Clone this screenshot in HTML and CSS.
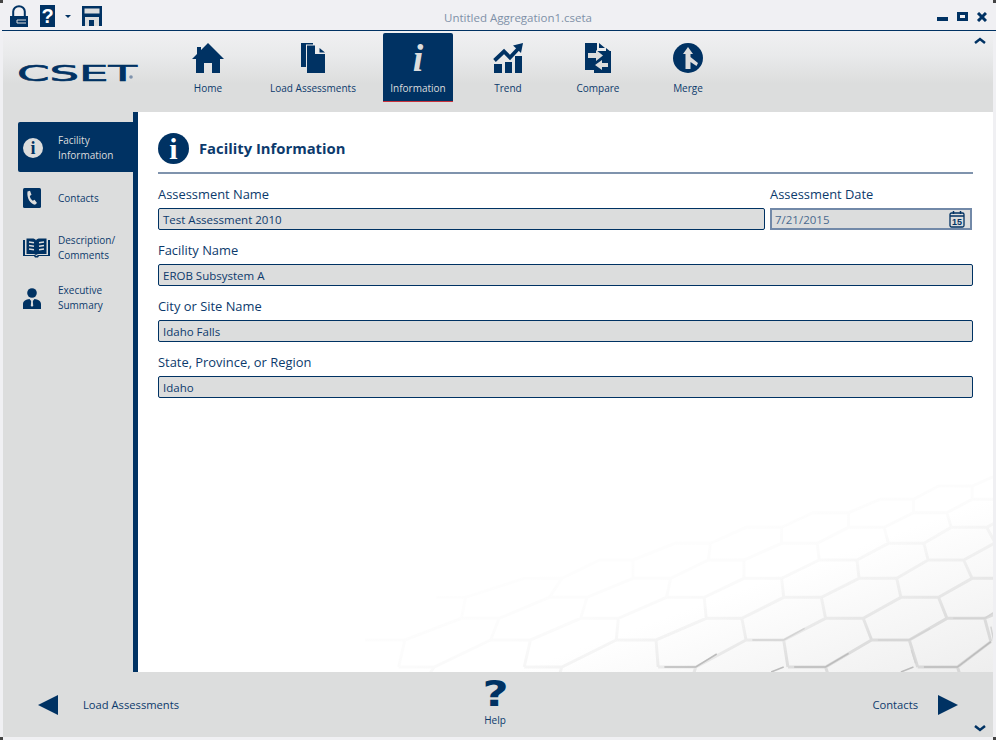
FILE: index.html
```html
<!DOCTYPE html>
<html lang="en">
<head>
    <meta charset="UTF-8">
    <meta name="viewport" content="width=device-width, initial-scale=1.0">
    <title>CSET</title>
    <link rel="stylesheet" href="styles.css">
</head>
<body>
    <span class="corner corner-tl"></span>
    <span class="corner corner-tr"></span>
    <span class="corner corner-bl"></span>
    <span class="corner corner-br"></span>

    <div class="titlebar">
        <div class="quick-tools">
            <svg class="tool-lock" width="18" height="22" viewBox="0 0 18 22"><path d="M3.200 12V6.500a5.800 5.300 0 0 1 11.600 0V12" fill="none" stroke="#003263" stroke-width="2"/><path d="M0 11h18v11H0z" fill="#003263"/><path d="M16 15H7v3h9" fill="none" stroke="#dcdddd"/></svg>
            <span class="tool-help">?</span>
            <span class="tool-caret"></span>
            <svg class="tool-save" width="20" height="20" viewBox="0 0 20 20"><path d="M0 0h20v20H0z" fill="#003263"/><path d="M2.500 2.500h15v5h-15zM3 11h14v9H3z" fill="#dcdddd"/><path d="M7 14h5v6H7z" fill="#003263"/></svg>
        </div>
        <div class="file-title">Untitled Aggregation1.cseta</div>
        <div class="window-buttons">
            <svg width="50" height="10" viewBox="0 0 50 10"><path d="M0 5h11v4H0z" fill="#003263"/><path fill-rule="evenodd" d="M20 0h11v9H20zM23 3v3h5V3z" fill="#003263"/><path d="M41 1l8 8M49 1l-8 8" stroke="#003263" stroke-width="3" fill="none"/></svg>
        </div>
    </div>

    <div class="app">
        <header class="ribbon">
            <div class="logo">
                <svg width="124" height="24" viewBox="0 0 124 24"><text x="-1" y="17" textLength="120" lengthAdjust="spacingAndGlyphs" class="logo-text">CSET</text><circle cx="113" cy="13" r="1.800" fill="#7f93ad"/></svg>
            </div>
            <nav class="ribbon-nav">
                <div class="nav-item">
                    <svg width="32" height="30" viewBox="0 0 32 30"><path d="M16 0L32 16h-4v14h-8V20h-8v10H4V16H0l5-5V4h4v3z" fill="#003263"/></svg>
                    <span>Home</span>
                </div>
                <div class="nav-item nav-wide">
                    <svg width="24" height="30" viewBox="0 0 24 30"><path d="M0 0h12v1.500H5V24H0z" fill="#003263"/><path d="M6 2.500h8V11h10v19H6z" fill="#003263"/><path d="M18.500 5L24 9.500h-5.500z" fill="#003263"/></svg>
                    <span>Load Assessments</span>
                </div>
                <div class="nav-item active">
                    <span class="info-glyph">i</span>
                    <span>Information</span>
                </div>
                <div class="nav-item">
                    <svg width="30" height="30" viewBox="0 0 30 30"><path d="M1 21h8v9H1zM12 19h7v11h-7zM22 13h7v17h-7z" fill="#003263"/><path d="M1.500 17.500l9.500-9 6 6L25 6" fill="none" stroke="#003263" stroke-width="3.800"/><path d="M20 2.500L30 0l-2 10z" fill="#003263"/></svg>
                    <span>Trend</span>
                </div>
                <div class="nav-item">
                    <svg width="26" height="30" viewBox="0 0 26 30"><path d="M0 0h12v8h14v22H9v-3H0z" fill="#003263"/><path d="M14 0l6 5h-6zM21 5l5 4h-5z" fill="#003263"/><path d="M3 10h8V7l7 5.500L11 18v-3H3zM23 20h-6v-3l-7 5 7 5v-3h6z" fill="#dcdddd"/></svg>
                    <span>Compare</span>
                </div>
                <div class="nav-item">
                    <svg width="30" height="30" viewBox="0 0 30 30"><circle cx="15" cy="15" r="15" fill="#003263"/><path d="M12.500 26V11H10l5-7 5 7h-2.500v3l7.500 6-1.500 3-6-4v7z" fill="#dcdddd"/></svg>
                    <span>Merge</span>
                </div>
            </nav>
            <svg class="collapse-btn" width="12" height="7" viewBox="0 0 12 7"><path d="M1 6l5-4 5 4" fill="none" stroke="#003263" stroke-width="2.500"/></svg>
        </header>

        <div class="workspace">
            <aside class="sidebar">
                <div class="side-item selected">
                    <span class="side-icon"><span class="circle-i small">i</span></span>
                    <span class="side-label">Facility<br>Information</span>
                </div>
                <div class="side-item">
                    <span class="side-icon"><svg width="18" height="20" viewBox="0 0 18 20"><rect width="18" height="20" rx="1.500" fill="#003263"/><path d="M4.500 3.500l2.500-.8 1.500 4-1.700 1.200c.3 2 1.400 3.700 3 4.800l1.700-1 2.500 3.200-2 1.800c-4.500-.5-8.500-6.500-7.500-13.200z" fill="#dcdddd"/></svg></span>
                    <span class="side-label">Contacts</span>
                </div>
                <div class="side-item">
                    <span class="side-icon"><svg width="27" height="20" viewBox="0 0 27 20"><path d="M0 2h2V17h9c1 0 2 .5 2.500 1 .5-.5 1.500-1 2.500-1h9V2h2v16H16l-1 1.500h-3L11 18H0z" fill="#003263"/><path d="M3.500 0.500H9c2 0 3.500.5 4 2 .5-1.500 2-2 4-2h6.500V16H16c-1.200 0-2.200.3-3 1-.8-.7-1.800-1-3-1H3.500z" fill="#003263"/><path d="M6 4l5 .8M6 7.500l5 .8M6 11l5 .8M21 4l-5 .8M21 7.500l-5 .8M21 11l-5 .8" stroke="#dcdddd" stroke-width="1.500"/></svg></span>
                    <span class="side-label">Description/<br>Comments</span>
                </div>
                <div class="side-item">
                    <span class="side-icon"><svg width="18" height="21" viewBox="0 0 18 21"><circle cx="9" cy="5" r="4.800" fill="#003263"/><path d="M0 21v-5c0-3 3-4.500 6.500-5L9 14l2.500-3c3.500.5 6.500 2 6.500 5v5z" fill="#003263"/><path d="M8.300 12.500h1.400l.5 5-1.200 1.500-1.200-1.500z" fill="#dcdddd"/></svg></span>
                    <span class="side-label">Executive<br>Summary</span>
                </div>
            </aside>

            <main class="content">
                <svg class="hex-bg" viewBox="0 0 1560 666" preserveAspectRatio="none">
                    <defs>
                        <linearGradient id="hexFade" gradientUnits="userSpaceOnUse" x1="800" y1="100" x2="1000" y2="666">
                            <stop offset="0" stop-color="#000" stop-opacity="0"/>
                            <stop offset="0.5" stop-color="#000" stop-opacity="0.015"/>
                            <stop offset="0.8" stop-color="#000" stop-opacity="0.05"/>
                            <stop offset="1" stop-color="#000" stop-opacity="0.1"/>
                        </linearGradient>
                    </defs>
                    <path class="hex-lines" d="M1380 651H1475L1555 575M1070 651H1160L1270 570H1360L1450 505H1540L1570 490M760 651H850L970 570H1060L1160 505H1250L1340 442H1430L1510 385H1570M440 651H530L660 570H755L875 505H960L1060 442H1150L1240 385H1330L1405 330H1490L1570 275M140 651H225L360 570H455L575 505H665L780 442H870L965 385H1055L1145 330H1235L1310 280H1395L1460 232H1545L1570 215M60 570H155L290 505H380L500 442H590L700 385H790L880 330H965L1055 280H1140L1215 232H1300L1370 188H1450L1510 148H1570M230 442H300L440 385H530L620 330H700L800 280H885L970 232H1055L1130 188H1215L1290 148H1370L1430 108H1510L1570 75M850 651L845 670M1160 651L1165 670M1475 651L1480 670M530 651L525 670M225 651L215 670M1060 570L1070 651M755 570L760 651M455 570L440 651M155 570L140 651M1360 570L1380 651M380 505L360 570M665 505L660 570M960 505L970 570M1250 505L1270 570M1540 505L1555 575M300 442L290 505M590 442L575 505M870 442L875 505M1150 442L1160 505M1430 442L1450 505M530 385L500 442M790 385L780 442M1055 385L1060 442M1330 385L1340 442M700 330L700 385M965 330L965 385M1235 330L1240 385M1490 330L1510 385M885 280L880 330M1140 280L1145 330M1395 280L1405 330M1055 232L1055 280M1300 232L1310 280M1545 232L1570 290M1215 188L1215 232M1450 188L1460 232M1370 148L1370 188M1510 108L1510 148"/>
                    <path class="hex-dark" d="M775 651H850L900 612M1085 651H1160L1215 610M1395 651H1475L1555 575M1030 666L1060 651M1340 666L1370 651"/>
                    <path class="hex-mid" d="M985 570H1060L1110 535M1285 570H1360L1410 535M1465 505H1540L1570 480M1555 530L1562 575M1365 600L1375 640"/>
                </svg>
                <div class="page-head">
                    <span class="circle-i">i</span>
                    <h1>Facility Information</h1>
                </div>
                <form class="fields">
                    <div class="field-row">
                        <div class="field">
                            <label>Assessment Name</label>
                            <div class="value">Test Assessment 2010</div>
                        </div>
                        <div class="field date-field">
                            <label>Assessment Date</label>
                            <div class="value date-value">
                                <span>7/21/2015</span>
                                <svg width="16" height="18" viewBox="0 0 16 18"><rect x="1" y="3" width="14" height="14" rx="1.500" fill="none" stroke="#003263" stroke-width="1.300"/><path d="M1 6h14M4.500 1v3M11.500 1v3" stroke="#003263" stroke-width="1.500"/><text x="8" y="15" class="cal-day">15</text></svg>
                            </div>
                        </div>
                    </div>
                    <div class="field">
                        <label>Facility Name</label>
                        <div class="value">EROB Subsystem A</div>
                    </div>
                    <div class="field">
                        <label>City or Site Name</label>
                        <div class="value">Idaho Falls</div>
                    </div>
                    <div class="field">
                        <label>State, Province, or Region</label>
                        <div class="value">Idaho</div>
                    </div>
                </form>
            </main>
        </div>

        <footer class="footer-bar">
            <div class="pager">
                <span class="arrow arrow-left"></span>
                <span>Load Assessments</span>
            </div>
            <div class="help-btn">
                <span class="help-mark">?</span>
                <span>Help</span>
            </div>
            <div class="pager pager-next">
                <span>Contacts</span>
                <span class="arrow arrow-right"></span>
            </div>
            <svg class="expand-btn" width="12" height="7" viewBox="0 0 12 7"><path d="M1 1l5 4 5-4" fill="none" stroke="#003263" stroke-width="2.500"/></svg>
        </footer>
    </div>
</body>
</html>
```

FILE: styles.css
```css
* {
    box-sizing: border-box;
}

html,
body {
    height: 100%;
}

body {
    margin: 0;
    background-color: #f0f0f3;
    color: #0c3a6c;
    font-family: "Open Sans", "Noto Sans", sans-serif;
    font-size: 12px;
    overflow: hidden;
}

/* resize marks in the window corners */
.corner {
    position: absolute;
    width: 3px;
    height: 3px;
    background-color: #444;
}

.corner-tl {
    top: 0;
    left: 0;
}

.corner-tr {
    top: 0;
    right: 0;
}

.corner-bl {
    bottom: 0;
    left: 0;
}

.corner-br {
    bottom: 0;
    right: 0;
}

/* title bar */
.titlebar {
    height: 31px;
    margin-left: 2px;
    border-bottom: 1px solid #003263;
    display: flex;
    align-items: flex-start;
}

.quick-tools {
    width: 113px;
    padding: 5px 0 0 8px;
    display: flex;
    align-items: flex-start;
}

.tool-help {
    width: 15px;
    height: 22px;
    margin-left: 12px;
    background-color: #003263;
    color: #fff;
    font-family: "Liberation Sans", sans-serif;
    font-weight: bold;
    font-size: 20px;
    line-height: 22px;
    text-align: center;
}

.tool-caret {
    margin: 10px 0 0 10px;
    border-left: 3px solid transparent;
    border-right: 3px solid transparent;
    border-top: 3px solid #003263;
}

.tool-save {
    margin: 1px 0 0 11px;
}

.file-title {
    flex: 1;
    padding: 10px 16px 0 0;
    color: #7f90a8;
    font-size: 11.500px;
    line-height: 15px;
    text-align: center;
}

.window-buttons {
    width: 59px;
    padding-top: 12px;
}

.window-buttons svg {
    display: block;
}

/* main frame */
.app {
    margin: 0 3px;
}

.ribbon {
    position: relative;
    height: 81px;
    background: linear-gradient(to bottom, #f0f0f2 0%, #e9eaeb 30%, #dcdddd 65%, #dcdddd 100%);
    display: flex;
}

.logo {
    width: 170px;
    padding: 33px 0 0 15px;
}

.logo svg {
    display: block;
    overflow: visible;
}

.logo-text {
    font-family: "DejaVu Sans", sans-serif;
    font-size: 22px;
    fill: #003263;
    stroke: #003263;
    stroke-width: 0.600;
}

.ribbon-nav {
    display: flex;
    gap: 20px;
    padding-top: 2px;
}

.nav-item {
    width: 70px;
    height: 69px;
    padding-top: 10px;
    display: flex;
    flex-direction: column;
    align-items: center;
    font-size: 10px;
    line-height: 14px;
}

.nav-item svg {
    height: 30px;
    margin-bottom: 8px;
}

.nav-wide {
    width: 100px;
}

.nav-item.active {
    background-color: #003263;
    border-bottom: 1px solid #c8323c;
    border-radius: 2px 2px 0 0;
    color: #dcdddd;
}

.info-glyph {
    height: 30px;
    margin-bottom: 8px;
    font-family: "Liberation Serif", serif;
    font-style: italic;
    font-weight: bold;
    font-size: 38px;
    line-height: 30px;
}

.collapse-btn {
    position: absolute;
    top: 6px;
    right: 7px;
}

.workspace {
    height: 560px;
    display: flex;
}

/* left menu */
.sidebar {
    width: 135px;
    padding: 10px 0 0 15px;
    background-color: #dcdddd;
    border-right: 5px solid #003263;
    flex-shrink: 0;
}

.side-item {
    height: 50px;
    display: flex;
    align-items: center;
    font-size: 10px;
    line-height: 15px;
}

.side-item.selected {
    margin-bottom: 1px;
    padding-top: 1px;
    background-color: #003263;
    border-radius: 2px 0 0 2px;
    color: #dcdddd;
}

.side-icon {
    width: 40px;
    padding-left: 5px;
    display: flex;
    flex-shrink: 0;
}

.circle-i {
    width: 31px;
    height: 31px;
    border-radius: 50%;
    background-color: #003263;
    color: #fff;
    font-family: "Liberation Serif", serif;
    font-weight: bold;
    font-size: 30px;
    line-height: 31px;
    text-align: center;
}

.circle-i.small {
    width: 20px;
    height: 20px;
    background-color: #dcdddd;
    color: #003263;
    font-size: 18px;
    line-height: 20px;
}

/* content */
.content {
    position: relative;
    flex: 1;
    padding: 0 20px;
    background: linear-gradient(160deg, #ffffff 80%, #eeeeee 100%);
    overflow: hidden;
}

.hex-bg {
    position: absolute;
    right: 0;
    bottom: 0;
    width: 653px;
    height: 222px;
}

.hex-lines,
.hex-dark,
.hex-mid {
    fill: none;
    vector-effect: non-scaling-stroke;
}

.hex-lines {
    stroke: url(#hexFade);
    stroke-width: 3;
}

.hex-dark {
    stroke: #bcbcbc;
    stroke-width: 1.500;
}

.hex-mid {
    stroke: #d4d4d4;
    stroke-width: 1.500;
}

.page-head {
    position: relative;
    height: 62px;
    padding-top: 21px;
    border-bottom: 2px solid #7f93ad;
    display: flex;
    gap: 10px;
}

.page-head h1 {
    margin: 0;
    font-size: 14.800px;
    font-weight: bold;
    line-height: 31px;
}

.fields {
    position: relative;
}

.field-row {
    display: grid;
    grid-template-columns: 1fr 203px;
    gap: 5px;
}

.field label {
    display: block;
    margin: 11px 0 5px;
    font-size: 12.900px;
    line-height: 18px;
}

.value {
    height: 22px;
    padding: 0 4px;
    background-color: #dcdddd;
    border: 1px solid #003263;
    border-radius: 2px;
    font-size: 11.500px;
    line-height: 21px;
}

.date-value {
    margin-right: 1px;
    border: 2px solid #7289a8;
    border-radius: 0;
    padding: 0 3px;
    color: #4a6a8f;
    display: flex;
    justify-content: space-between;
    align-items: center;
}

.date-value svg {
    margin-right: 2px;
}

.cal-day {
    font-family: "Liberation Sans", sans-serif;
    font-weight: bold;
    font-size: 9px;
    text-anchor: middle;
    fill: #003263;
}

/* bottom bar */
.footer-bar {
    position: relative;
    height: 65px;
    padding: 0 35px;
    background-color: #dcdddd;
    display: grid;
    grid-template-columns: 1fr auto 1fr;
    align-items: start;
    font-size: 11.200px;
}

.pager {
    height: 65px;
    display: flex;
    align-items: center;
    gap: 25px;
}

.pager-next {
    justify-content: flex-end;
    gap: 20px;
}

.arrow {
    border-top: 10px solid transparent;
    border-bottom: 10px solid transparent;
}

.arrow-left {
    border-right: 20px solid #003263;
}

.arrow-right {
    border-left: 20px solid #003263;
}

.help-btn {
    margin-right: 6px;
    padding-top: 3px;
    display: flex;
    flex-direction: column;
    align-items: center;
    font-size: 10px;
    line-height: 14px;
}

.help-mark {
    height: 38px;
    color: #003263;
    font-family: "DejaVu Sans", sans-serif;
    font-weight: bold;
    font-size: 36px;
    line-height: 38px;
    transform: scaleX(1.25);
}

.expand-btn {
    position: absolute;
    right: 7px;
    bottom: 5px;
}
```
